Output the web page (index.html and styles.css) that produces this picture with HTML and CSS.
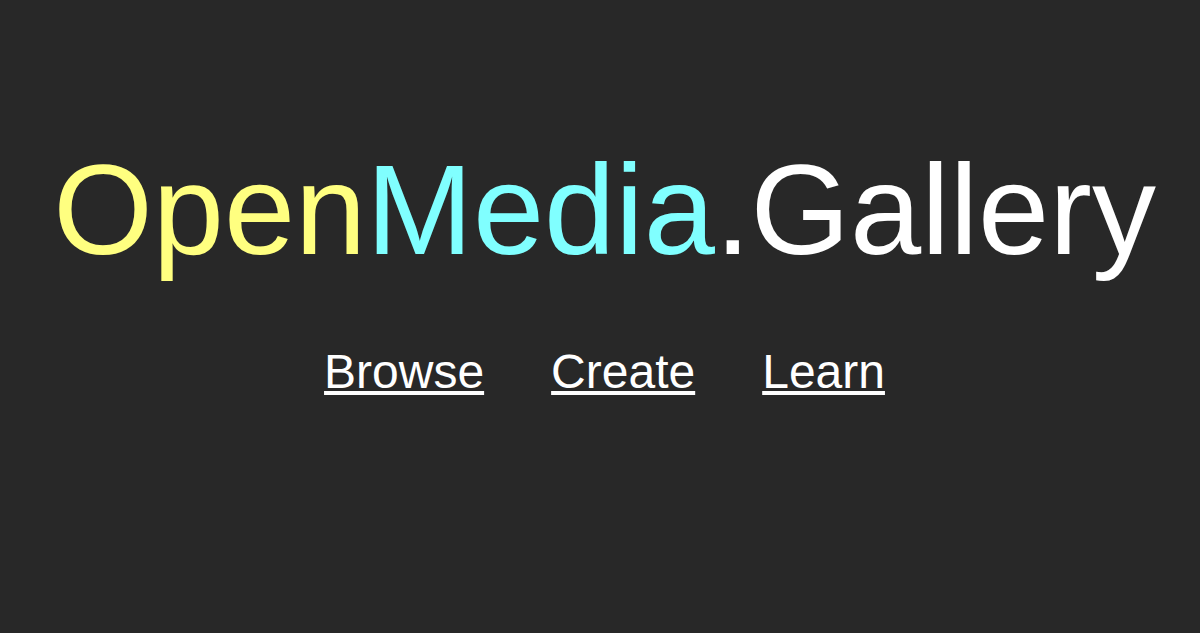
FILE: index.html
```html
<!DOCTYPE html>
<html lang="en">
<head>
<meta charset="utf-8">
<title>OpenMedia.Gallery</title>
<link rel="stylesheet" href="styles.css">
</head>
<body>
<main class="hero">
  <h1 class="logo"><span class="open">Open</span><span class="media">Media</span><span class="gallery">.Gallery</span></h1>
  <nav class="nav">
    <a href="#">Browse</a>
    <a href="#">Create</a>
    <a href="#">Learn</a>
  </nav>
</main>
</body>
</html>
```

FILE: styles.css
```css
html, body {
  margin: 0;
  padding: 0;
  background: #282828;
  height: 100%;
}
body {
  font-family: "Liberation Sans", Arial, sans-serif;
  color: #ffffff;
}
.hero {
  display: flex;
  flex-direction: column;
  align-items: center;
  padding-top: 136px;
  padding-left: 9px;
}
.logo {
  margin: 0;
  font-size: 128px;
  font-weight: normal;
  line-height: normal;
  white-space: nowrap;
}
.open { color: #ffff80; }
.media { color: #80ffff; }
.gallery { color: #ffffff; }
.nav {
  display: flex;
  gap: 67px;
  margin-top: 61px;
  font-size: 48px;
  line-height: normal;
}
.nav a {
  color: #ffffff;
  text-decoration: underline;
}
```
